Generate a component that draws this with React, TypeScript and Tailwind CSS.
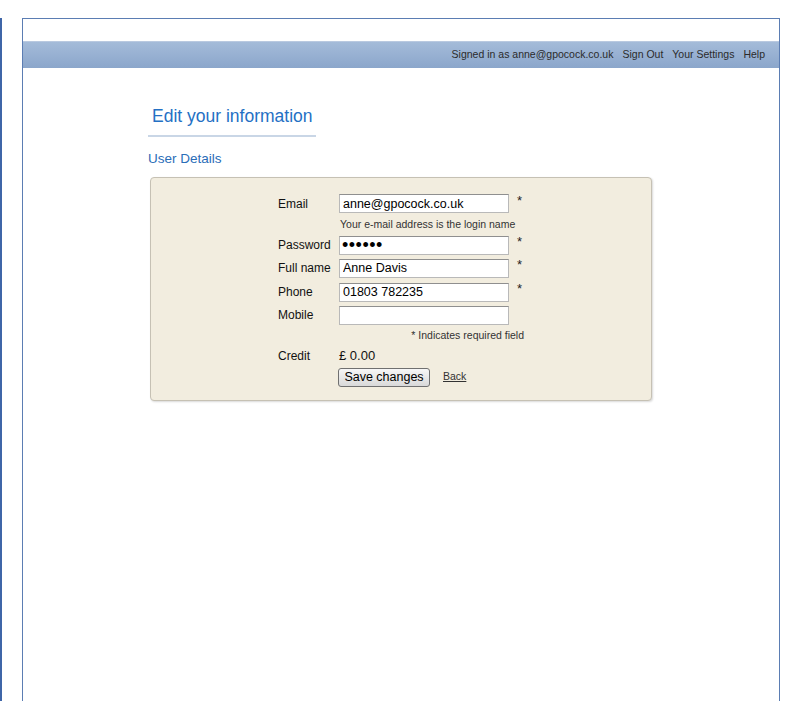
const font = { fontFamily: '"Liberation Sans", Arial, sans-serif' };

function Field({ label, value, type = "text", required = false, extra = "" }: { label: string; value: string; type?: string; required?: boolean; extra?: string }) {
  return (
    <div className={"flex h-[19px] items-center " + extra}>
      <span className="w-[61px] text-[12px] text-[#111]">{label}</span>
      <input
        type={type}
        readOnly
        defaultValue={value}
        className={
          type === "password"
            ? "h-[19px] w-[170px] border border-[#b9b9b9] border-t-[#8f8f8f] bg-white px-[2px] text-[18px] leading-none tracking-[0.5px] text-black outline-none"
            : "h-[19px] w-[170px] border border-[#b9b9b9] border-t-[#8f8f8f] bg-white px-[3px] text-[12.5px] text-black outline-none"
        }
        style={font}
      />
      {required && <span className="-mt-[6px] ml-[8px] text-[13px] text-[#222]">*</span>}
    </div>
  );
}

export default function App() {
  return (
    <div className="min-h-[701px] border-l-2 border-[#3f66a8] bg-white" style={font}>
      <div className="ml-[20px] mt-[18px] min-h-[683px] w-[758px] border-x border-t border-[#5b7db3] bg-white">
        <div className="h-[22px]" />
        <div className="flex h-[27px] items-center justify-end gap-[9px] border-t border-[#b9c9e0] bg-gradient-to-b from-[#a4bbd9] to-[#8ba6cb] pr-[14px] text-[10.5px] text-[#2b2b2b]">
          <span>Signed in as anne@gpocock.co.uk</span>
          <span>Sign Out</span>
          <span>Your Settings</span>
          <span>Help</span>
        </div>

        <div className="ml-[125px] mt-[35px] w-[168px] border-b-2 border-[#c9d6e6] pb-[6px] pl-[4px] text-[17.5px] text-[#2470c4]">
          Edit your information
        </div>
        <div className="ml-[125px] mt-[12px] text-[13.5px] text-[#2a6db8]">User Details</div>

        <div className="ml-[127px] mt-[7px] h-[224px] w-[502px] rounded-[4px] border border-[#c6c1b4] bg-[#f2eddf] pl-[127px] pt-[16px] shadow-[1px_1px_2px_rgba(0,0,0,0.15)]">
          <Field label="Email" value="anne@gpocock.co.uk" required extra="h-[20px]" />
          <div className="ml-[62px] flex h-[22px] items-center text-[10.5px] text-[#333]">Your e-mail address is the login name</div>
          <div className="flex flex-col gap-[4px]">
            <Field label="Password" value="secret" type="password" required />
            <Field label="Full name" value="Anne Davis" required />
            <Field label="Phone" value="01803 782235" required extra="mt-[1px]" />
            <Field label="Mobile" value="" />
          </div>
          <div className="flex h-[22px] w-[246px] items-center justify-end text-[10.5px] text-[#333]">* Indicates required field</div>
          <div className="flex h-[18px] items-center">
            <span className="w-[61px] text-[12px] text-[#111]">Credit</span>
            <span className="text-[13px] text-[#111]">£ 0.00</span>
          </div>
          <div className="mt-[3px] flex items-center">
            <button
              className="ml-[60px] h-[19px] w-[92px] rounded-[3px] border border-[#707070] bg-gradient-to-b from-[#f7f7f7] to-[#d9d9d9] text-[12.5px] leading-none text-black"
              style={font}
            >
              Save changes
            </button>
            <a className="ml-[13px] text-[10.5px] text-[#333] underline">Back</a>
          </div>
        </div>
      </div>
    </div>
  );
}
